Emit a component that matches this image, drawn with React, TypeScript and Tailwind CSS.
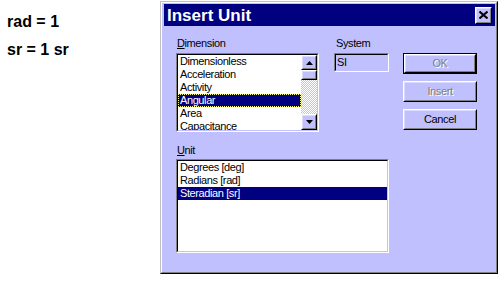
import type { ReactNode } from 'react';

function Raised({ className = '', children }: { className?: string; children?: ReactNode }) {
  return (
    <div className={`border border-t-white border-l-white border-r-black border-b-black ${className}`}>
      <div className="h-full w-full border border-t-[#dcdcff] border-l-[#dcdcff] border-r-[#808080] border-b-[#808080] bg-[#c0c0ff] flex items-center justify-center">
        {children}
      </div>
    </div>
  );
}

function Sunken({ className = '', children }: { className?: string; children?: ReactNode }) {
  return (
    <div className={`border border-t-[#808080] border-l-[#808080] border-r-white border-b-white ${className}`}>
      <div className="h-full w-full border border-t-black border-l-black border-r-[#c0c0ff] border-b-[#c0c0ff] flex overflow-hidden">
        {children}
      </div>
    </div>
  );
}

function Arrow({ down }: { down?: boolean }) {
  return (
    <svg width="7" height="4" viewBox="0 0 7 4">
      <polygon points={down ? '0,0 7,0 3.5,4' : '3.5,0 7,4 0,4'} fill="#000" />
    </svg>
  );
}

function Item({ label, selected, focus }: { label: string; selected?: boolean; focus?: boolean }) {
  return (
    <div
      className={
        'h-[13px] leading-[13px] pl-[2px] whitespace-nowrap ' +
        (selected ? 'bg-[#000080] text-white ' : 'text-black ') +
        (focus ? 'outline-1 outline-dotted outline-[#ffff80] -outline-offset-1' : '')
      }
    >
      {label}
    </div>
  );
}

function Button({ label, disabled, isDefault }: { label: string; disabled?: boolean; isDefault?: boolean }) {
  const text = disabled ? (
    <span className="text-[#808080] [text-shadow:1px_1px_0_#fff]">{label}</span>
  ) : (
    <span className="text-black">{label}</span>
  );
  if (isDefault) {
    return (
      <div className="h-[21px] w-[74px] border border-black">
        <Raised className="h-full w-full">{text}</Raised>
      </div>
    );
  }
  return <Raised className="h-[21px] w-[74px]">{text}</Raised>;
}

export default function App() {
  const dimensions = ['Dimensionless', 'Acceleration', 'Activity', 'Angular', 'Area', 'Capacitance'];
  const units = ['Degrees [deg]', 'Radians [rad]', 'Steradian [sr]'];

  return (
    <div className="flex w-[504px] h-[283px] bg-white font-['Liberation_Sans',Arial,sans-serif]">
      {/* worksheet text */}
      <div className="w-[160px] shrink-0 pl-[7px] pt-[8px] text-[16px] leading-[28px] font-bold text-black">
        <p>rad = 1</p>
        <p>sr = 1 sr</p>
      </div>

      {/* dialog */}
      <div className="mt-[1px] w-[338px] h-[273px] border border-t-[#c0c0c0] border-l-[#c0c0c0] border-r-black border-b-black">
        <div className="h-full flex flex-col bg-[#c0c0ff] border border-t-white border-l-white border-r-[#808080] border-b-[#808080] pt-[1px] pl-[2px] pr-[1px]">
          <div className="h-[22px] shrink-0 bg-[#000080] flex items-center justify-between">
            <span className="pl-[3px] pt-[1px] text-[17px] leading-[22px] font-bold text-white">Insert Unit</span>
            <Raised className="w-[17px] h-[17px] mr-[3px]">
              <svg width="9" height="8" viewBox="0 0 9 8">
                <path d="M0.5 0.5 L8.5 7.5 M8.5 0.5 L0.5 7.5" stroke="#000" strokeWidth="2" />
              </svg>
            </Raised>
          </div>

          <div className="flex-1 pl-[12px] pt-[11px] text-[11px] tracking-[-0.4px] leading-[13px] text-black">
            <div className="flex">
              <div className="w-[143px]">
                <div className="h-[16px] pl-[1px]"><u>D</u>imension</div>
                <Sunken className="h-[79px] bg-white">
                  <div className="flex-1 bg-white">
                    {dimensions.map(d => (
                      <Item key={d} label={d} selected={d === 'Angular'} focus={d === 'Angular'} />
                    ))}
                  </div>
                  <div className="w-[16px] flex flex-col">
                    <Raised className="h-[15px]"><Arrow /></Raised>
                    <Raised className="h-[10px]" />
                    <div className="flex-1 bg-[image:repeating-conic-gradient(#fff_0_25%,#c0c0ff_0_50%)] bg-[length:2px_2px]" />
                    <Raised className="h-[16px]"><Arrow down /></Raised>
                  </div>
                </Sunken>
              </div>

              <div className="ml-[15px] w-[55px]">
                <div className="h-[16px] pl-[2px]">System</div>
                <Sunken className="h-[19px]">
                  <div className="flex-1 bg-[#c0c0ff] pl-[1px] leading-[15px]">SI</div>
                </Sunken>
              </div>

              <div className="ml-[14px] mt-[16px] flex flex-col gap-[7px]">
                <Button label="OK" disabled isDefault />
                <Button label="Insert" disabled />
                <Button label="Cancel" />
              </div>
            </div>

            <div className="mt-[12px] h-[15px] pl-[1px]"><u>U</u>nit</div>
            <Sunken className="w-[213px] h-[94px]">
              <div className="flex-1 bg-white">
                {units.map(u => (
                  <Item key={u} label={u} selected={u === 'Steradian [sr]'} />
                ))}
              </div>
            </Sunken>
          </div>
        </div>
      </div>
    </div>
  );
}
